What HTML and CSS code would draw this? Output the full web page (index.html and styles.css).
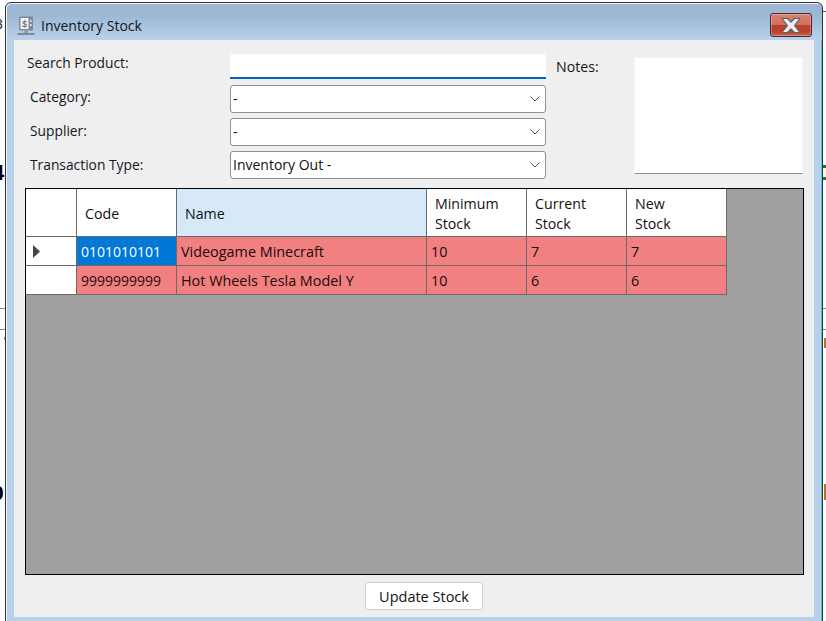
FILE: index.html
```html
<!DOCTYPE html>
<html lang="en">
<head>
<meta charset="utf-8">
<title>Inventory Stock</title>
<link rel="stylesheet" href="styles.css">
</head>
<body>
<div class="backdrop">
  <span class="bit bit-3">3</span>
  <span class="bit bit-4">4</span>
  <span class="bit bit-0">0</span>
  <span class="rule rule-l1"></span>
  <span class="rule rule-l2"></span>
  <span class="rule rule-r0"></span>
  <span class="rule rule-r1"></span>
  <span class="rule rule-r2"></span>
  <span class="tick tick-a"></span>
  <span class="tick tick-b"></span>
  <span class="tick tick-c"></span>
  <span class="tick-left"></span>
</div>
<main class="window">
  <header class="titlebar">
    <svg class="app-icon" width="18" height="20" viewBox="0 0 18 20" aria-hidden="true">
      <rect x="2" y="0.5" width="14" height="14" rx="1" fill="#7f8a96"/>
      <rect x="3.5" y="2" width="8" height="11" fill="#f4f6f8"/>
      <text x="7.5" y="10.5" text-anchor="middle" class="icon-dollar">$</text>
      <rect x="13" y="4" width="1.5" height="2" fill="#e8edf2"/>
      <rect x="13" y="8" width="1.5" height="2" fill="#e8edf2"/>
      <rect x="7.5" y="14.5" width="3" height="2.5" fill="#8a949f"/>
      <rect x="0.5" y="17" width="17" height="2" fill="#7f8a96"/>
    </svg>
    <span class="title">Inventory Stock</span>
    <button class="close" type="button" aria-label="Close">
      <svg width="22" height="17" viewBox="0 0 22 17" aria-hidden="true">
        <path d="M2 1.5H7.5L11 5L14.5 1.5H20L14.5 8.5L20 15.5H14.5L11 12L7.5 15.5H2L7.5 8.5Z" fill="#eef0f3" stroke="#5b5f6b" stroke-width="1.2" stroke-linejoin="round"/>
      </svg>
    </button>
  </header>
  <div class="client">
    <section class="filters">
      <div class="fields">
        <label class="label label-search">Search Product:</label>
        <div class="search"></div>
        <label class="label label-category">Category:</label>
        <div class="combo"><span>-</span><svg class="chev" width="10" height="6" viewBox="0 0 10 6"><path d="M0.5 0.5L5 5L9.5 0.5" fill="none" stroke="#555"/></svg></div>
        <label class="label label-supplier">Supplier:</label>
        <div class="combo"><span>-</span><svg class="chev" width="10" height="6" viewBox="0 0 10 6"><path d="M0.5 0.5L5 5L9.5 0.5" fill="none" stroke="#555"/></svg></div>
        <label class="label label-type">Transaction Type:</label>
        <div class="combo"><span>Inventory Out -</span><svg class="chev" width="10" height="6" viewBox="0 0 10 6"><path d="M0.5 0.5L5 5L9.5 0.5" fill="none" stroke="#555"/></svg></div>
      </div>
      <label class="label notes-label">Notes:</label>
      <div class="notes"></div>
    </section>
    <section class="grid-view">
      <div class="table">
        <div class="cell corner"></div>
        <div class="cell head">Code</div>
        <div class="cell head head-active">Name</div>
        <div class="cell head">Minimum<br>Stock</div>
        <div class="cell head">Current<br>Stock</div>
        <div class="cell head">New<br>Stock</div>

        <div class="cell rowhead"><svg width="7" height="13" viewBox="0 0 7 13"><path d="M0 0L7 6.5L0 13Z" fill="#444"/></svg></div>
        <div class="cell data data-code selected">0101010101</div>
        <div class="cell data">Videogame Minecraft</div>
        <div class="cell data">10</div>
        <div class="cell data">7</div>
        <div class="cell data">7</div>

        <div class="cell rowhead"></div>
        <div class="cell data data-code">9999999999</div>
        <div class="cell data">Hot Wheels Tesla Model Y</div>
        <div class="cell data">10</div>
        <div class="cell data">6</div>
        <div class="cell data">6</div>
      </div>
    </section>
    <footer class="actions">
      <button class="update" type="button">Update Stock</button>
    </footer>
  </div>
</main>
</body>
</html>
```
FILE: styles.css
```css
* { box-sizing: border-box; }
html, body { margin: 0; height: 621px; overflow: hidden; }
body {
  background: #fbfbfb;
  font-family: "Open Sans", "Noto Sans", sans-serif;
  font-size: 14px;
  color: #111;
  padding: 2px 3px 0 5px;
  position: relative;
}
.backdrop { position: absolute; inset: 0; overflow: hidden; }
.bit { position: absolute; font-family: "Liberation Sans", sans-serif; line-height: 1; }
.bit-3 { left: -5px; top: 17px; font-size: 14px; color: #234; }
.bit-4 { left: -8px; top: 162px; font-size: 22px; font-weight: 700; color: #000; }
.bit-0 { left: -8px; top: 482px; font-size: 21px; font-weight: 700; color: #000; }
.rule { position: absolute; height: 1px; background: #888; width: 5px; }
.rule-l1 { left: 0; top: 308px; }
.rule-l2 { left: 0; top: 329px; }
.rule-r0 { right: 0; width: 3px; top: 11px; background: #555; }
.rule-r1 { right: 0; width: 3px; top: 308px; }
.rule-r2 { right: 0; width: 3px; top: 329px; }
.tick { position: absolute; right: 0; width: 3px; }
.tick-a { top: 165px; height: 15px; border-top: 3px solid #1f7a1f; border-bottom: 3px solid #1f7a1f; background: #fbf3d8; }
.tick-b { top: 338px; width: 2px; height: 10px; background: #b8741a; }
.tick-c { top: 484px; width: 2px; height: 16px; background: #b8701a; }
.tick-left { position: absolute; left: 4px; top: 337px; width: 1px; height: 3px; background: #d08a2a; }

.window {
  position: relative;
  width: 818px;
  height: 625px;
  border: 1px solid #2e3338;
  border-radius: 6px 6px 0 0;
  background: #b8d1ea;
  box-shadow: inset 1px 1px 0 #f4f6f8, inset -1px 0 0 #5fc0e0;
  padding: 1px 8px 0 8px;
  display: flex;
  flex-direction: column;
}
.titlebar {
  flex: none;
  height: 36px;
  margin: 0 -8px 0 -7px;
  padding: 0 10px;
  display: flex;
  align-items: flex-start;
  background: linear-gradient(#9cb7d4 0, #9cb7d4 30%, #b9d2ec 100%);
  border-radius: 5px 5px 0 0;
}
.app-icon { flex: none; margin-top: 12px; }
.icon-dollar { font-family: "Liberation Sans", sans-serif; font-size: 9px; fill: #555; }
.title { margin-left: 6px; margin-top: 12px; font-size: 14px; line-height: 20px; color: #10151c; }
.close {
  margin-left: auto;
  margin-top: 9px;
  width: 42px;
  height: 24px;
  padding: 0;
  display: flex;
  align-items: center;
  justify-content: center;
  border: 1px solid #4a2430;
  border-radius: 3px;
  background: linear-gradient(#d9806f 0, #d0705c 48%, #b8432a 50%, #b8432a 80%, #c9654d 100%);
  box-shadow: inset 0 0 0 1px rgba(255,255,255,.28);
}
.client {
  flex: none;
  width: 800px;
  height: 577px;
  background: #efefef;
}

.filters { position: relative; height: 148px; }
.fields {
  display: grid;
  grid-template-columns: 216px 316px;
  grid-auto-rows: 28px;
  row-gap: 5px;
  padding-top: 12px;
}
.label { line-height: 20px; padding-left: 16px; color: #14181e; font-size: 13.8px; }
.label-search { padding-left: 13px; margin-top: 1px; }
.label-category { margin-top: 2px; }
.label-supplier { margin-top: 3px; }
.label-type { margin-top: 4px; }
.search {
  height: 25px;
  margin-top: 2px;
  background: #fff;
  border-bottom: 2px solid #0067c0;
  border-radius: 3px 3px 0 0;
}
.combo {
  display: flex;
  align-items: center;
  justify-content: space-between;
  padding: 0 5px 2px 2px;
  background: #fff;
  border: 1px solid #8f8f8f;
  border-radius: 3px;
}
.chev { margin-top: 2px; }
.notes-label { position: absolute; left: 542px; top: 17px; padding: 0; font-size: 14.2px; }
.notes {
  position: absolute;
  left: 620px;
  top: 17px;
  width: 169px;
  height: 117px;
  background: #fff;
  border: 1px solid #f6f6f6;
  border-bottom: 1px solid #8f8f8f;
}

.grid-view {
  margin-left: 11px;
  width: 779px;
  height: 387px;
  background: #a0a0a0;
  border: 1px solid #000;
}
.table {
  display: grid;
  grid-template-columns: 51px 100px 250px 100px 100px 100px;
  grid-template-rows: 48px 29px 29px;
  width: 701px;
}
.cell {
  border-right: 1px solid #6a6a6a;
  border-bottom: 1px solid #6a6a6a;
  display: flex;
  align-items: center;
  overflow: hidden;
}
.corner, .rowhead { background: #fff; }
.rowhead { padding-left: 7px; }
.head { background: #fff; padding: 2px 0 0 8px; line-height: 20px; font-size: 14.2px; }
.head-active { background: #d7e9f8; }
.data { background: #f28080; padding-left: 4px; color: #1a0a0a; font-size: 14.4px; }
.data-code { font-size: 14px; }
.selected { background: #0078d7; color: #fff; }

.actions { display: flex; justify-content: center; padding-top: 7px; padding-left: 20px; }
.update {
  width: 118px;
  height: 28px;
  padding: 0;
  background: #fff;
  border: 1px solid #cfcfcf;
  border-radius: 3px;
  font: inherit;
  font-size: 14.5px;
  color: #111;
}
```
